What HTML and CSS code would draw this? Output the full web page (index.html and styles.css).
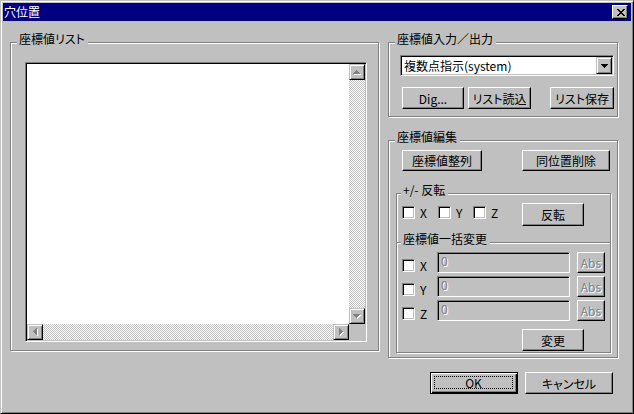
FILE: index.html
```html
<!DOCTYPE html>
<html lang="ja">
<head>
    <meta charset="UTF-8">
    <title>穴位置</title>
    <link rel="stylesheet" href="styles.css">
</head>
<body>
    <div class="window">
        <div class="titlebar">
            <span class="title">穴位置</span>
            <span class="close">
                <svg width="8" height="7" viewBox="0 0 8 7" shape-rendering="crispEdges"><path d="M0 0h2v1h-2z M6 0h2v1h-2z M1 1h2v1h-2z M5 1h2v1h-2z M2 2h4v1h-4z M3 3h2v1h-2z M2 4h4v1h-4z M1 5h2v1h-2z M5 5h2v1h-2z M0 6h2v1h-2z M6 6h2v1h-2z" fill="#000"/></svg>
            </span>
        </div>

        <div class="client">
            <!-- 座標値リスト -->
            <div class="group list-group">
                <span class="legend">座標値リスト</span>
                <div class="listbox">
                    <div class="list-area"></div>
                    <div class="vscroll">
                        <span class="sbtn">
                            <svg width="8" height="5" viewBox="0 0 8 5" shape-rendering="crispEdges"><path transform="translate(1 1)" fill="#fff" d="M3 0h1v1h-1z M2 1h3v1h-3z M1 2h5v1h-5z M0 3h7v1h-7z"/><path fill="#808080" d="M3 0h1v1h-1z M2 1h3v1h-3z M1 2h5v1h-5z M0 3h7v1h-7z"/></svg>
                        </span>
                        <span class="track"></span>
                        <span class="sbtn">
                            <svg width="8" height="5" viewBox="0 0 8 5" shape-rendering="crispEdges"><path transform="translate(1 1)" fill="#fff" d="M0 0h7v1h-7z M1 1h5v1h-5z M2 2h3v1h-3z M3 3h1v1h-1z"/><path fill="#808080" d="M0 0h7v1h-7z M1 1h5v1h-5z M2 2h3v1h-3z M3 3h1v1h-1z"/></svg>
                        </span>
                    </div>
                    <div class="hscroll">
                        <span class="sbtn">
                            <svg width="5" height="8" viewBox="0 0 5 8" shape-rendering="crispEdges"><path transform="translate(1 1)" fill="#fff" d="M3 0h1v7h-1z M2 1h1v5h-1z M1 2h1v3h-1z M0 3h1v1h-1z"/><path fill="#808080" d="M3 0h1v7h-1z M2 1h1v5h-1z M1 2h1v3h-1z M0 3h1v1h-1z"/></svg>
                        </span>
                        <span class="track"></span>
                        <span class="sbtn">
                            <svg width="5" height="8" viewBox="0 0 5 8" shape-rendering="crispEdges"><path transform="translate(1 1)" fill="#fff" d="M0 0h1v7h-1z M1 1h1v5h-1z M2 2h1v3h-1z M3 3h1v1h-1z"/><path fill="#808080" d="M0 0h1v7h-1z M1 1h1v5h-1z M2 2h1v3h-1z M3 3h1v1h-1z"/></svg>
                        </span>
                    </div>
                    <div class="corner"></div>
                </div>
            </div>

            <div class="side">
                <!-- 座標値入力／出力 -->
                <div class="group io-group">
                    <span class="legend">座標値入力／出力</span>
                    <div class="combo sunken">
                        <span class="combo-text">複数点指示(system)</span>
                        <span class="ddbtn">
                            <svg width="7" height="4" viewBox="0 0 7 4" shape-rendering="crispEdges"><path fill="#000" d="M0 0h7v1h-7z M1 1h5v1h-5z M2 2h3v1h-3z M3 3h1v1h-1z"/></svg>
                        </span>
                    </div>
                    <div class="row io-buttons">
                        <span class="btn btn-dig">Dig...</span>
                        <span class="btn btn-load">リスト読込</span>
                        <span class="btn btn-save">リスト保存</span>
                    </div>
                </div>

                <!-- 座標値編集 -->
                <div class="group edit-group">
                    <span class="legend">座標値編集</span>
                    <div class="row edit-buttons">
                        <span class="btn btn-sort">座標値整列</span>
                        <span class="btn btn-dedup">同位置削除</span>
                    </div>

                    <div class="group sub flip-group">
                        <span class="legend">+/- 反転</span>
                        <div class="row flip-row">
                            <span class="check w36"><span class="cbox"></span><span class="clabel">X</span></span>
                            <span class="check w35"><span class="cbox"></span><span class="clabel">Y</span></span>
                            <span class="check w49"><span class="cbox"></span><span class="clabel">Z</span></span>
                            <span class="btn btn-flip">反転</span>
                        </div>
                    </div>

                    <div class="group sub batch-group">
                        <span class="legend">座標値一括変更</span>
                        <div class="batch-rows">
                            <div class="batch-row">
                                <span class="check w35"><span class="cbox"></span><span class="clabel">X</span></span>
                                <span class="field sunken">0</span>
                                <span class="btn abs">Abs</span>
                            </div>
                            <div class="batch-row">
                                <span class="check w35"><span class="cbox"></span><span class="clabel">Y</span></span>
                                <span class="field sunken">0</span>
                                <span class="btn abs">Abs</span>
                            </div>
                            <div class="batch-row">
                                <span class="check w35"><span class="cbox"></span><span class="clabel">Z</span></span>
                                <span class="field sunken">0</span>
                                <span class="btn abs">Abs</span>
                            </div>
                        </div>
                        <span class="btn btn-apply">変更</span>
                    </div>
                </div>

                <div class="row dialog-buttons">
                    <span class="btn default"><span class="focus">OK</span></span>
                    <span class="btn btn-cancel">キャンセル</span>
                </div>
            </div>
        </div>
    </div>
</body>
</html>
```

FILE: styles.css
```css
* {
    box-sizing: border-box;
}
body {
    margin: 0;
    font-family: "Noto Sans CJK JP", "Liberation Sans", sans-serif;
    font-size: 12px;
    font-feature-settings: "palt";
    color: #000;
    background: #c0c0c0;
}
.window {
    width: 634px;
    height: 414px;
    border: 1px solid;
    border-color: #c0c0c0 #000 #000 #c0c0c0;
    box-shadow: inset 1px 1px #fff, inset -1px -1px #808080;
    padding: 2px;
    background: #c0c0c0;
    display: flex;
    flex-direction: column;
}
.titlebar {
    height: 18px;
    flex: none;
    background: #000080;
    color: #fff;
    display: flex;
    align-items: center;
    justify-content: space-between;
    padding: 0 3px 0 1px;
}
.title {
    line-height: 16px;
}
.close {
    width: 16px;
    height: 14px;
    background: #c0c0c0;
    border: 1px solid;
    border-color: #fff #000 #000 #fff;
    box-shadow: inset -1px -1px #808080;
    display: flex;
    align-items: center;
    justify-content: center;
    padding-left: 1px;
}
.client {
    flex: 1;
    display: flex;
    align-items: flex-start;
    padding: 21px 0 0 7px;
}

/* group boxes */
.group {
    position: relative;
    flex: none;
    border: 1px solid #808080;
    box-shadow: inset 1px 1px #fff, 1px 1px #fff;
}
.legend {
    position: absolute;
    top: -11px;
    left: 6px;
    padding: 0 3px 0 2px;
    background: #c0c0c0;
    line-height: 14px;
    white-space: nowrap;
}
.sub .legend {
    left: 4px;
}

/* 3D helpers */
.sunken {
    border: 1px solid;
    border-color: #808080 #fff #fff #808080;
    box-shadow: inset 1px 1px #000, inset -1px -1px #c0c0c0;
    padding: 1px;
}
.btn {
    flex: none;
    height: 22px;
    background: #c0c0c0;
    border: 1px solid;
    border-color: #fff #000 #000 #fff;
    box-shadow: inset -1px -1px #808080;
    display: flex;
    align-items: center;
    justify-content: center;
    white-space: nowrap;
}
.row {
    display: flex;
}

/* list */
.list-group {
    width: 369px;
    height: 309px;
    padding: 19px 0 0 14px;
}
.listbox {
    width: 342px;
    height: 280px;
    border: 1px solid;
    border-color: #808080 #fff #fff #808080;
    box-shadow: inset 1px 1px #000, inset -1px -1px #c0c0c0;
    padding: 1px;
    background: #c0c0c0;
    display: grid;
    grid-template-columns: 1fr 16px;
    grid-template-rows: 1fr 16px;
}
.list-area {
    background: #fff;
}
.vscroll {
    display: flex;
    flex-direction: column;
}
.hscroll {
    display: flex;
}
.track {
    flex: 1;
    background: repeating-conic-gradient(#c0c0c0 0 25%, #fff 0 50%) 0 0 / 2px 2px;
}
.sbtn, .ddbtn {
    flex: none;
    width: 16px;
    height: 16px;
    background: #c0c0c0;
    border: 1px solid;
    border-color: #c0c0c0 #000 #000 #c0c0c0;
    box-shadow: inset 1px 1px #fff, inset -1px -1px #808080;
    display: flex;
    align-items: center;
    justify-content: center;
}

/* right side */
.side {
    margin-left: 9px;
    display: flex;
    flex-direction: column;
}
.io-group {
    width: 230px;
    height: 75px;
}
.combo {
    margin: 12px 0 0 11px;
    width: 214px;
    height: 21px;
    background: #fff;
    display: flex;
    align-items: center;
}
.combo-text {
    flex: 1;
    padding-left: 2px;
    line-height: 14px;
}
.ddbtn {
    height: 17px;
}
.io-buttons {
    margin: 11px 0 0 13px;
}
.btn-dig { width: 62px; }
.btn-load { width: 63px; margin-left: 4px; }
.btn-save { width: 64px; margin-left: 19px; }

.edit-group {
    width: 230px;
    height: 218px;
    margin-top: 23px;
}
.edit-buttons {
    margin: 9px 0 0 13px;
}
.btn-sort { width: 80px; height: 21px; }
.btn-dedup { width: 88px; height: 21px; margin-left: 40px; }

.flip-group {
    width: 215px;
    height: 49px;
    margin: 22px 0 0 7px;
    border-bottom: none;
}
.flip-row {
    margin: 9px 0 0 5px;
    align-items: flex-start;
}
.check {
    flex: none;
    display: flex;
    align-items: center;
    height: 13px;
}
.flip-row .check {
    margin-top: 3px;
}
.w35 { width: 35px; }
.w36 { width: 36px; }
.w49 { width: 49px; }
.cbox {
    flex: none;
    width: 13px;
    height: 13px;
    background: #fff;
    border: 1px solid;
    border-color: #808080 #fff #fff #808080;
    box-shadow: inset 1px 1px #000, inset -1px -1px #c0c0c0;
}
.clabel {
    margin-left: 5px;
    line-height: 13px;
}
.btn-flip {
    width: 62px;
    height: 23px;
}

.batch-group {
    width: 215px;
    height: 111px;
    margin-left: 7px;
}
.batch-rows {
    margin: 9px 0 0 5px;
    display: flex;
    flex-direction: column;
    gap: 3px;
}
.batch-row {
    display: flex;
    align-items: flex-start;
    height: 21px;
}
.batch-row .check {
    margin-top: 7px;
}
.field {
    width: 133px;
    height: 21px;
    background: #c0c0c0;
    color: #808080;
    text-shadow: 1px 1px #fff;
    padding: 1px 0 0 3px;
    line-height: 13px;
}
.abs {
    width: 28px;
    height: 21px;
    margin-left: 7px;
    color: #808080;
    text-shadow: 1px 1px #fff;
}
.btn-apply {
    width: 62px;
    margin: 8px 0 0 125px;
}

.dialog-buttons {
    margin: 14px 0 0 42px;
}
.default {
    width: 88px;
    border: 1px solid #000;
    box-shadow: inset 1px 1px #fff, inset -1px -1px #000, inset -2px -2px #808080;
    padding: 3px 4px 4px 3px;
}
.focus {
    flex: 1;
    align-self: stretch;
    border: 1px dotted #000;
    display: flex;
    align-items: center;
    justify-content: center;
}
.btn-cancel {
    width: 88px;
    margin-left: 7px;
}
```
